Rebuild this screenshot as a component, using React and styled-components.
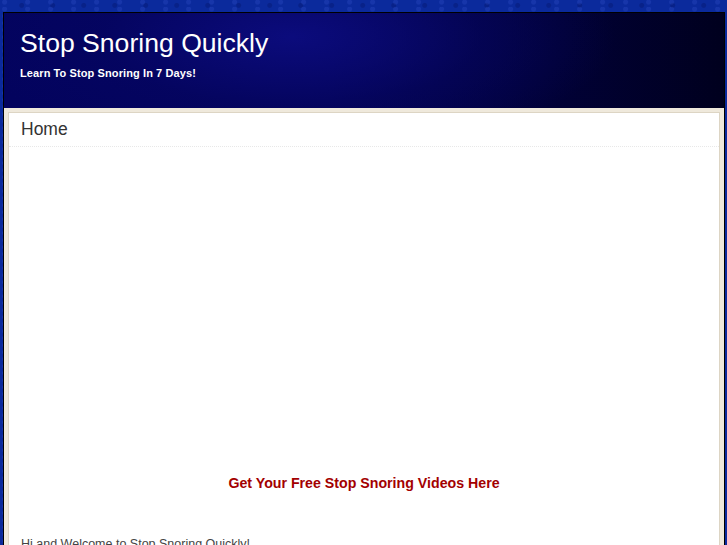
import React from 'react'
import styled, { createGlobalStyle } from 'styled-components'

const GlobalStyle = createGlobalStyle`
  html, body {
    margin: 0;
    padding: 0;
  }
  body {
    background-color: #0b2a9c;
    background-image:
      radial-gradient(circle at 20% 30%, rgba(60,90,210,0.25) 0 2px, transparent 3px),
      radial-gradient(circle at 70% 60%, rgba(0,10,80,0.25) 0 2px, transparent 3px);
    background-size: 23px 7px, 31px 9px;
    font-family: "Liberation Sans", Arial, sans-serif;
    overflow: hidden;
  }
`

export default function App() {
  return (
    <>
      <GlobalStyle />
      <Page>
        <Header>
          <SiteTitle>Stop Snoring Quickly</SiteTitle>
          <Tagline>Learn To Stop Snoring In 7 Days!</Tagline>
        </Header>
        <Frame>
          <ContentBox>
            <PageTitle>Home</PageTitle>
            <VideoSpace />
            <PromoLink href="#">Get Your Free Stop Snoring Videos Here</PromoLink>
            <Paragraph>Hi and Welcome to Stop Snoring Quickly!</Paragraph>
          </ContentBox>
        </Frame>
      </Page>
    </>
  )
}

const Page = styled.div`
  width: 720px;
  margin: 12px 0 0 3px;
  border-left: 1px solid #000;
  border-right: 1px solid #000;
`
const Header = styled.div`
  height: 96px;
  border-top: 1px solid #000;
  box-sizing: border-box;
  padding: 14px 0 0 16px;
  background:
    radial-gradient(ellipse 380px 140px at 40% 25%, rgba(12,12,128,0.9) 0%, rgba(6,6,100,0.5) 50%, transparent 85%),
    linear-gradient(90deg, #03035e 0%, #030358 45%, #010138 75%, #00001e 100%);
`
const SiteTitle = styled.div`
  font-size: 26.6px;
  line-height: 32px;
  color: #ffffff;
`
const Tagline = styled.div`
  margin-top: 8px;
  font-size: 11px;
  font-weight: bold;
  color: #ffffff;
  letter-spacing: 0.1px;
`
const Frame = styled.div`
  background: #efe9dc;
  padding: 4px 4px 0 4px;
  height: 450px;
  box-sizing: border-box;
`
const ContentBox = styled.div`
  background: #ffffff;
  border: 1px solid #ddd5c4;
  border-bottom: none;
  height: 100%;
  box-sizing: border-box;
  display: flex;
  flex-direction: column;
`
const PageTitle = styled.div`
  font-size: 17.5px;
  color: #333333;
  padding: 6px 12px 6px 12px;
  line-height: 21px;
  border-bottom: 1px dotted #e8e8e8;
`
const VideoSpace = styled.div`
  height: 327px;
`
const PromoLink = styled.a`
  align-self: center;
  font-size: 14.2px;
  font-weight: bold;
  color: #a30000;
  text-decoration: none;
  line-height: 18px;
`
const Paragraph = styled.p`
  margin: 45px 0 0 12px;
  font-size: 12.5px;
  color: #444444;
`
